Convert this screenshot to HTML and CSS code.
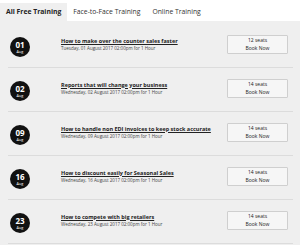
FILE: index.html
```
<!DOCTYPE html>
<html lang="en">
<head>
    <meta charset="UTF-8">
    <title>Training</title>
    <link rel="stylesheet" href="styles.css">
</head>
<body>
    <div class="tabs">
        <div class="tab active">All Free Training</div>
        <div class="tab">Face-to-Face Training</div>
        <div class="tab">Online Training</div>
    </div>
    <div class="panel">
        <div class="row">
            <div class="day"><span>01</span><p>Aug</p></div>
            <div class="info">
                <a href="#">How to make over the counter sales faster</a>
                <p>Tuesday, 01 August 2017 02:00pm for 1 Hour</p>
            </div>
            <button>12 seats<br>Book Now</button>
        </div>
        <div class="row">
            <div class="day"><span>02</span><p>Aug</p></div>
            <div class="info">
                <a href="#">Reports that will change your business</a>
                <p>Wednesday, 02 August 2017 02:00pm for 1 Hour</p>
            </div>
            <button>14 seats<br>Book Now</button>
        </div>
        <div class="row">
            <div class="day"><span>09</span><p>Aug</p></div>
            <div class="info">
                <a href="#">How to handle non EDI invoices to keep stock accurate</a>
                <p>Wednesday, 09 August 2017 02:00pm for 1 Hour</p>
            </div>
            <button>14 seats<br>Book Now</button>
        </div>
        <div class="row">
            <div class="day"><span>16</span><p>Aug</p></div>
            <div class="info">
                <a href="#">How to discount easily for Seasonal Sales</a>
                <p>Wednesday, 16 August 2017 02:00pm for 1 Hour</p>
            </div>
            <button>14 seats<br>Book Now</button>
        </div>
        <div class="row">
            <div class="day"><span>23</span><p>Aug</p></div>
            <div class="info">
                <a href="#">How to compete with big retailers</a>
                <p>Wednesday, 23 August 2017 02:00pm for 1 Hour</p>
            </div>
            <button>14 seats<br>Book Now</button>
        </div>
    </div>
</body>
</html>
```

FILE: styles.css
```
* {
    margin: 0;
    padding: 0;
    box-sizing: border-box;
    font-family: "Open Sans", sans-serif;
}

body {
    background: #fff;
    color: #333;
    width: 300px;
    height: 245px;
    overflow: hidden;
}

.tabs {
    display: flex;
    padding-top: 3px;
    height: 21px;
}

.tab {
    font-size: 6.8px;
    line-height: 18px;
    padding: 0 6px;
    color: #333;
}

.tab.active {
    background: #efefef;
    font-weight: 700;
    color: #222;
}

.panel {
    background: #efefef;
    padding: 3px 7px 0 8px;
    height: 224px;
}

.row {
    display: flex;
    align-items: center;
    height: 44px;
    border-bottom: 1px solid #dcdcdc;
}

.day {
    width: 20px;
    height: 20px;
    border-radius: 50%;
    background: #111;
    color: #fff;
    margin: 3px 0 0 2px;
    display: flex;
    flex-direction: column;
    align-items: center;
    justify-content: center;
}

.day span {
    font-size: 8px;
    font-weight: 700;
    line-height: 8px;
    margin-top: 1px;
}

.day p {
    font-size: 3.8px;
    line-height: 5px;
}

.info {
    flex: 1;
    margin-left: 31px;
    margin-top: -3px;
}

.info a {
    display: block;
    font-size: 5.5px;
    font-weight: 700;
    color: #222;
    line-height: 7px;
}

.info p {
    font-size: 4.5px;
    line-height: 6px;
    color: #444;
}

button {
    width: 61px;
    height: 19px;
    background: #f6f6f6;
    border: 1px solid #cfcfcf;
    border-radius: 1px;
    font-size: 5px;
    line-height: 7.5px;
    color: #222;
    margin-top: -2px;
    margin-right: 5px;
}
```
